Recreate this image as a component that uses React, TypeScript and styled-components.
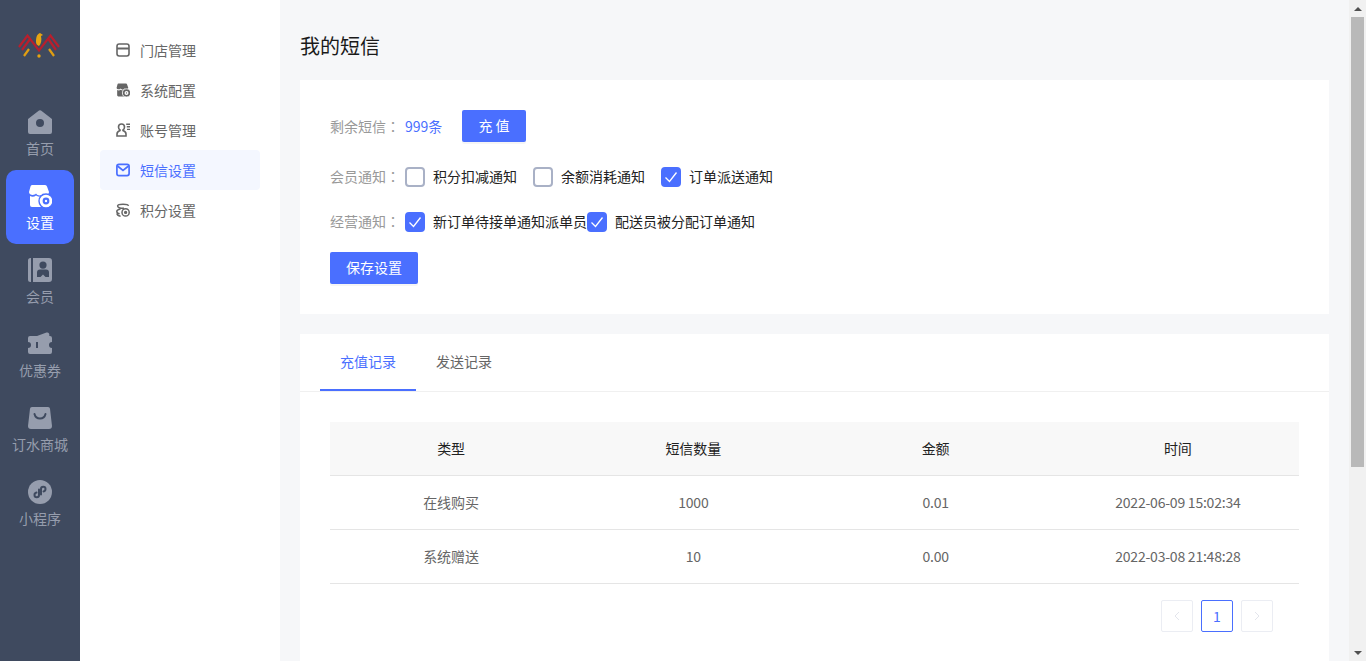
import React from "react";
import styled, { createGlobalStyle } from "styled-components";

const GlobalStyle = createGlobalStyle`
  html, body {
    margin: 0;
    padding: 0;
    height: 100%;
    overflow: hidden;
  }
  body {
    font-family: "Noto Sans CJK SC", "Liberation Sans", sans-serif;
    font-size: 14px;
    color: #333;
  }
  * {
    box-sizing: border-box;
  }
`;

const Page = styled.div`
  display: flex;
  height: 661px;
  width: 1366px;
`;

const Sidebar = styled.div`
  width: 80px;
  flex-shrink: 0;
  background: #3f4a5f;
  display: flex;
  flex-direction: column;
  align-items: center;
`;

const LogoBox = styled.div`
  height: 96px;
  padding-top: 30px;
`;

const NavItem = styled.div<{ $active?: boolean }>`
  width: 68px;
  height: 74px;
  border-radius: 10px;
  display: flex;
  flex-direction: column;
  align-items: center;
  padding-top: 14px;
  gap: 4px;
  color: ${(p) => (p.$active ? "#fff" : "#969dad")};
  background: ${(p) => (p.$active ? "#4a6fff" : "transparent")};
  svg {
    width: 24px;
    height: 24px;
    display: block;
  }
  span {
    line-height: 20px;
    white-space: nowrap;
  }
`;

const SubMenu = styled.div`
  width: 200px;
  flex-shrink: 0;
  background: #fff;
  padding: 30px 20px;
`;

const SubItem = styled.div<{ $active?: boolean }>`
  height: 40px;
  display: flex;
  align-items: center;
  padding-left: 16px;
  gap: 10px;
  border-radius: 4px;
  color: ${(p) => (p.$active ? "#4a6fff" : "#666")};
  background: ${(p) => (p.$active ? "#f4f7ff" : "transparent")};
  svg {
    width: 14px;
    height: 14px;
    display: block;
  }
`;

const Main = styled.div`
  flex: 1;
  min-width: 0;
  height: 661px;
  background: #f6f7f9;
  overflow: hidden;
`;

const ScrollBar = styled.div`
  width: 17px;
  flex-shrink: 0;
  background: #f1f1f1;
  display: flex;
  flex-direction: column;
  align-items: center;
`;

const ScrollArrow = styled.div<{ $down?: boolean }>`
  height: 17px;
  width: 17px;
  display: flex;
  align-items: center;
  justify-content: center;
  &::before {
    content: "";
    border-left: 4px solid transparent;
    border-right: 4px solid transparent;
    ${(p) => (p.$down ? "border-top: 4px solid #505050;" : "border-bottom: 4px solid #505050;")}
  }
`;

const ScrollThumb = styled.div`
  width: 13px;
  height: 450px;
  background: #b9b9b9;
`;

const ScrollRest = styled.div`
  flex: 1;
`;

const Content = styled.div`
  padding: 0 20px 20px;
`;

const PageTitle = styled.h1`
  margin: 0;
  height: 80px;
  line-height: 92px;
  font-size: 20px;
  font-weight: 400;
  color: #1a1a1a;
`;

const SettingsCard = styled.div`
  background: #fff;
  height: 234px;
  padding: 30px;
  margin-bottom: 20px;
`;

const Row = styled.div<{ $gap: number }>`
  display: flex;
  align-items: center;
  margin-bottom: ${(p) => p.$gap}px;
`;

const Label = styled.span<{ $raised?: boolean }>`
  width: 75px;
  flex-shrink: 0;
  color: #999;
  ${(p) => p.$raised && "height: 20px; line-height: 18px;"}
`;

const Colon = styled.span`
  font-family: "Noto Sans CJK TC", sans-serif;
`;

const Remain = styled.span`
  width: 57px;
  color: #4a6fff;
`;

const Button = styled.button<{ $width: number }>`
  width: ${(p) => p.$width}px;
  height: 32px;
  border: 0;
  border-radius: 2px;
  padding: 0 0 2px;
  background: #4a6fff;
  color: #fff;
  font: inherit;
  box-shadow: 0 2px 0 rgba(0, 0, 0, 0.04);
`;

const CheckItem = styled.label<{ $flush?: boolean }>`
  display: flex;
  align-items: center;
  gap: 8px;
  height: 20px;
  margin-right: ${(p) => (p.$flush ? 0 : 16)}px;
  color: #222;
`;

const CheckText = styled.span`
  height: 20px;
  line-height: 18px;
`;

const Box = styled.span<{ $checked?: boolean }>`
  width: 20px;
  height: 20px;
  border-radius: 4px;
  display: flex;
  align-items: center;
  justify-content: center;
  border: 2px solid ${(p) => (p.$checked ? "#4a6fff" : "#a9b1c6")};
  background: ${(p) => (p.$checked ? "#4a6fff" : "#fff")};
`;

const RecordCard = styled.div`
  background: #fff;
  min-height: 500px;
`;

const Tabs = styled.div`
  display: flex;
  height: 58px;
  padding-left: 20px;
  border-bottom: 1px solid #f0f0f0;
`;

const Tab = styled.div<{ $active?: boolean }>`
  padding: 0 20px;
  height: 57px;
  line-height: 54px;
  color: ${(p) => (p.$active ? "#4a6fff" : "#666")};
  border-bottom: 2px solid ${(p) => (p.$active ? "#4a6fff" : "transparent")};
`;

const TableWrap = styled.div`
  padding: 30px 30px 0;
`;

const Table = styled.table`
  width: 100%;
  table-layout: fixed;
  border-collapse: separate;
  border-spacing: 0;
  th {
    height: 54px;
    padding: 0 0 2px;
    background: #f8f8f8;
    font-weight: 400;
    color: #222;
    border-bottom: 1px solid #e5e5e5;
  }
  td {
    height: 54px;
    padding: 0 0 2px;
    text-align: center;
    color: #666;
    border-bottom: 1px solid #e5e5e5;
  }
`;

const Num = styled.span`
  letter-spacing: -0.22px;
`;

const Pager = styled.div`
  display: flex;
  justify-content: flex-end;
  gap: 8px;
  padding: 16px 26px 0 0;
`;

const PageBtn = styled.div<{ $current?: boolean }>`
  width: 32px;
  height: 32px;
  border-radius: 2px;
  display: flex;
  align-items: center;
  justify-content: center;
  border: 1px solid ${(p) => (p.$current ? "#4a6fff" : "#ebedf3")};
  color: ${(p) => (p.$current ? "#4a6fff" : "#e3e5ec")};
`;

const Logo = () => (
  <svg width="44" height="30" viewBox="0 0 44 30" fill="none">
    <path d="M1 17 L9.5 5.5 L21 20.5 L32.5 5.5 L41 17" stroke="#b81f2d" strokeWidth="2.2" />
    <path d="M4 20 L12.5 8.5 M30 8.5 L38 20" stroke="#b81f2d" strokeWidth="2.2" />
    <path d="M6 26 L11 19 M36 26 L31 19" stroke="#e09e12" strokeWidth="2.2" />
    <path d="M18 12 C18 7 19 4 22 3 L25 5 L23 6 C24 10 23 14 21 16 C19 15 18 14 18 12 Z" fill="#e6a412" />
    <circle cx="21" cy="26" r="1.7" fill="#e6a412" />
  </svg>
);

const HomeIcon = () => (
  <svg viewBox="0 0 24 24">
    <path
      fill="currentColor"
      fillRule="evenodd"
      d="M11 0.5 a2 2 0 0 1 2 0 L24 9 V22 a2 2 0 0 1-2 2 H2 a2 2 0 0 1-2-2 V9 Z M12 9 a4 4 0 1 0 0 8 a4 4 0 0 0 0-8 Z"
    />
  </svg>
);

const ShopIcon = ({ hole = "#4a6fff" }: { hole?: string }) => (
  <svg viewBox="0 0 24 24">
    <path
      fill="currentColor"
      d="M4 1 H17 a2 2 0 0 1 2 1.5 L21 8 C21 11 17 12 15 9.5 C13.5 12 9.5 12 8 9.5 C6 12 1 11 1 8 L2.5 2.5 A2 2 0 0 1 4 1 Z"
    />
    <path fill="currentColor" d="M2 12 C4 13 6 13 8 11.5 C10 13 12 13 15 11.5 V23 H4 a2 2 0 0 1-2-2 Z" />
    <circle cx="18" cy="17" r="7" fill="currentColor" stroke={hole} strokeWidth="1.4" />
    <circle cx="18" cy="17" r="3.4" fill={hole} />
    <circle cx="18" cy="17" r="1.2" fill="currentColor" />
  </svg>
);

const MemberIcon = () => (
  <svg viewBox="0 0 24 24">
    <path
      fill="currentColor"
      fillRule="evenodd"
      d="M3 0 V24 H2.5 a2.5 2.5 0 0 1-2.5-2.5 V2.5 A2.5 2.5 0 0 1 2.5 0 Z M5 0 H21 a3 3 0 0 1 3 3 V21 a3 3 0 0 1-3 3 H5 Z M15 3.5 a3.6 3.6 0 1 0 0 7.2 a3.6 3.6 0 0 0 0-7.2 Z M9 19 V14.5 a3 3 0 0 1 3-3 H18 a3 3 0 0 1 3 3 V19 H17.5 L15 16.5 L12.5 19 Z"
    />
  </svg>
);

const WalletIcon = () => (
  <svg viewBox="0 0 24 24">
    <path
      fill="currentColor"
      fillRule="evenodd"
      d="M9 4 L18.5 0.6 a2 2 0 0 1 2.8 1.6 V4 H22 a2 2 0 0 1 2 2 V10 a3 3 0 0 0 0 6 V20 a2 2 0 0 1-2 2 H2 a2 2 0 0 1-2-2 V16 a3 3 0 0 0 0-6 V6 a2 2 0 0 1 2-2 Z M8 10 V16 H10 V10 Z"
    />
  </svg>
);

const BagIcon = () => (
  <svg viewBox="0 0 24 24">
    <path
      fill="currentColor"
      d="M4 1 H20 a2 2 0 0 1 2 1.8 L24 20 a3 3 0 0 1-3 3 H3 a3 3 0 0 1-3-3 L2 2.8 A2 2 0 0 1 4 1 Z"
    />
    <path fill="none" stroke="#3f4a5f" strokeWidth="2" strokeLinecap="round" d="M6.5 8 C8 14 16 14 17.5 8" />
  </svg>
);

const MiniIcon = () => (
  <svg viewBox="0 0 24 24">
    <circle cx="12" cy="12" r="12" fill="currentColor" />
    <path
      fill="none"
      stroke="#3f4a5f"
      strokeWidth="2"
      strokeLinecap="round"
      d="M11 9.5 V15 C11 18 6.5 18 6.5 15 C6.5 13.5 7.5 12.8 8.5 12.6 M13 14.5 V9 C13 6 17.5 6 17.5 9 C17.5 10.5 16.5 11.2 15.5 11.4"
    />
  </svg>
);

const StoreOutline = () => (
  <svg viewBox="0 0 14 14" fill="none" stroke="currentColor" strokeWidth="1.6">
    <rect x="1" y="1" width="12" height="12" rx="2.2" />
    <path d="M1 5.5 H13" strokeWidth="2" />
  </svg>
);

const UserLines = () => (
  <svg viewBox="0 0 14 14" fill="none" stroke="currentColor" strokeWidth="1.6">
    <path d="M5.5 1 C3.5 1 2.5 2.5 2.5 4 C2.5 5.5 3.2 6.5 4 7 V7.6 C2 8.4 1 9.5 1 11 V13 H10 V11 C10 9.5 9 8.4 7 7.6 V7 C7.8 6.5 8.5 5.5 8.5 4 C8.5 2.5 7.5 1 5.5 1 Z" />
    <path d="M10.2 1.2 H14 M10.8 3.8 H14 M11 6.4 H14" strokeWidth="1.4" />
  </svg>
);

const MailIcon = () => (
  <svg viewBox="0 0 14 14" fill="none" stroke="currentColor" strokeWidth="1.7">
    <rect x="0.9" y="1.4" width="12.2" height="11.2" rx="2" />
    <path d="M1.5 3 L7 7.5 L12.5 3" />
  </svg>
);

const CoinIcon = () => (
  <svg viewBox="0 0 14 14" fill="none" stroke="currentColor" strokeWidth="1.5">
    <path d="M12.5 2.8 C12 0.6 2 0.6 1.6 2.8 C1.4 4.4 4 5.4 8 5.2" />
    <path d="M4.5 6 C2 6.4 0.8 7.2 0.8 8.4 C0.8 9.6 2 10.4 3.6 10.8 M1 10.4 C1 12 2.4 12.8 4.6 13.2" />
    <circle cx="9.6" cy="9.4" r="3.6" />
    <circle cx="9.6" cy="9.4" r="0.9" fill="currentColor" />
  </svg>
);

const Tick = () => (
  <svg width="14" height="14" viewBox="0 0 14 14" fill="none" stroke="#fff" strokeWidth="1.3">
    <path d="M1.5 7.5 L5.5 11.5 L12.5 2.5" />
  </svg>
);

const navItems = [
  { label: "首页", icon: <HomeIcon /> },
  { label: "设置", icon: <ShopIcon />, active: true },
  { label: "会员", icon: <MemberIcon /> },
  { label: "优惠券", icon: <WalletIcon /> },
  { label: "订水商城", icon: <BagIcon /> },
  { label: "小程序", icon: <MiniIcon /> },
];

const subItems = [
  { label: "门店管理", icon: <StoreOutline /> },
  { label: "系统配置", icon: <ShopIcon hole="#fff" /> },
  { label: "账号管理", icon: <UserLines /> },
  { label: "短信设置", icon: <MailIcon />, active: true },
  { label: "积分设置", icon: <CoinIcon /> },
];

const records = [
  { type: "在线购买", count: "1000", amount: "0.01", time: "2022-06-09 15:02:34" },
  { type: "系统赠送", count: "10", amount: "0.00", time: "2022-03-08 21:48:28" },
];

const Check = ({ text, checked, flush }: { text: string; checked?: boolean; flush?: boolean }) => (
  <CheckItem $flush={flush}>
    <Box $checked={checked}>{checked && <Tick />}</Box>
    <CheckText>{text}</CheckText>
  </CheckItem>
);

const App = () => {
  return (
    <Page>
      <GlobalStyle />
      <Sidebar>
        <LogoBox>
          <Logo />
        </LogoBox>
        {navItems.map((item) => (
          <NavItem key={item.label} $active={item.active}>
            {item.icon}
            <span>{item.label}</span>
          </NavItem>
        ))}
      </Sidebar>
      <SubMenu>
        {subItems.map((item) => (
          <SubItem key={item.label} $active={item.active}>
            {item.icon}
            {item.label}
          </SubItem>
        ))}
      </SubMenu>
      <Main>
        <Content>
          <PageTitle>我的短信</PageTitle>
          <SettingsCard>
            <Row $gap={25}>
              <Label>
                剩余短信<Colon>：</Colon>
              </Label>
              <Remain>999条</Remain>
              <Button $width={64}>充 值</Button>
            </Row>
            <Row $gap={25}>
              <Label $raised>
                会员通知<Colon>：</Colon>
              </Label>
              <Check text="积分扣减通知" />
              <Check text="余额消耗通知" />
              <Check text="订单派送通知" checked />
            </Row>
            <Row $gap={20}>
              <Label $raised>
                经营通知<Colon>：</Colon>
              </Label>
              <Check text="新订单待接单通知派单员" checked flush />
              <Check text="配送员被分配订单通知" checked />
            </Row>
            <Button $width={88}>保存设置</Button>
          </SettingsCard>
          <RecordCard>
            <Tabs>
              <Tab $active>充值记录</Tab>
              <Tab>发送记录</Tab>
            </Tabs>
            <TableWrap>
              <Table>
                <thead>
                  <tr>
                    <th>类型</th>
                    <th>短信数量</th>
                    <th>金额</th>
                    <th>时间</th>
                  </tr>
                </thead>
                <tbody>
                  {records.map((r) => (
                    <tr key={r.time}>
                      <td>{r.type}</td>
                      <td>
                        <Num>{r.count}</Num>
                      </td>
                      <td>
                        <Num>{r.amount}</Num>
                      </td>
                      <td>
                        <Num>{r.time}</Num>
                      </td>
                    </tr>
                  ))}
                </tbody>
              </Table>
              <Pager>
                <PageBtn>
                  <svg width="10" height="10" viewBox="0 0 10 10" fill="none" stroke="currentColor">
                    <path d="M7 1 L3 5 L7 9" />
                  </svg>
                </PageBtn>
                <PageBtn $current>1</PageBtn>
                <PageBtn>
                  <svg width="10" height="10" viewBox="0 0 10 10" fill="none" stroke="currentColor">
                    <path d="M3 1 L7 5 L3 9" />
                  </svg>
                </PageBtn>
              </Pager>
            </TableWrap>
          </RecordCard>
        </Content>
      </Main>
      <ScrollBar>
        <ScrollArrow />
        <ScrollThumb />
        <ScrollRest />
        <ScrollArrow $down />
      </ScrollBar>
    </Page>
  );
};

export default App;
